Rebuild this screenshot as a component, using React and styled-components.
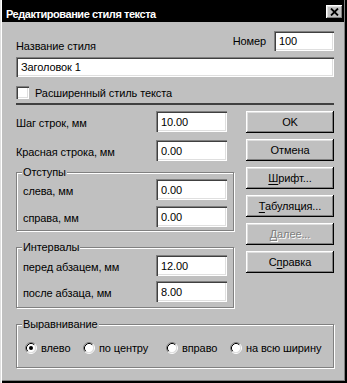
import React from 'react';
import styled, { createGlobalStyle } from 'styled-components';

const GlobalStyle = createGlobalStyle`
  *, *::before, *::after { box-sizing: border-box; }
  html, body { margin: 0; padding: 0; background: #c0c0c0; }
  body {
    font-family: "Liberation Sans", Arial, sans-serif;
    font-size: 11px;
    letter-spacing: -0.1px;
    color: #000;
  }
`;

const Window = styled.div`
  width: 347px;
  height: 383px;
  padding: 0 3px 3px 2px;
  background: #c0c0c0;
  display: flex;
  flex-direction: column;
  box-shadow: inset 1px 0 #dfdfdf, inset 2px 0 #fff, inset -2px -2px #000,
    inset -3px -3px #808080;
`;

const TitleBar = styled.div`
  height: 22px;
  flex: none;
  background: #000;
  color: #fff;
  display: flex;
  align-items: flex-start;
  justify-content: space-between;
  padding: 0 1px 0 4px;
`;

const TitleText = styled.span`
  margin-top: 7px;
  font-size: 11px;
  font-weight: bold;
  letter-spacing: -0.45px;
  line-height: 14px;
`;

const CloseButton = styled.div`
  margin-top: 5px;
  width: 17px;
  height: 14px;
  background: #c0c0c0;
  display: flex;
  align-items: center;
  justify-content: center;
  box-shadow: inset -1px -1px #000, inset 1px 1px #fff, inset -2px -2px #808080,
    inset 2px 2px #dfdfdf;
`;

const Body = styled.div`
  flex: 1;
  padding: 9px 10px 0 14px;
  display: flex;
  flex-direction: column;
`;

const TopRow = styled.div`
  height: 20px;
  display: flex;
  justify-content: space-between;
  align-items: flex-end;
`;

const Label = styled.span`
  line-height: 14px;
  white-space: nowrap;
  margin-bottom: ${p => p.$drop || 0}px;
`;

const NumberGroup = styled.div`
  height: 20px;
  display: flex;
  align-items: center;
  gap: 8px;
`;

const Field = styled.div`
  flex: none;
  width: ${p => (p.$w ? `${p.$w}px` : '100%')};
  height: ${p => p.$h || 21}px;
  margin-top: ${p => p.$top || 0}px;
  background: #fff;
  padding: 0 4px 0 5px;
  display: flex;
  align-items: center;
  line-height: 14px;
  white-space: nowrap;
  box-shadow: inset 1px 1px #808080, inset 2px 2px #404040, inset -1px -1px #fff,
    inset -2px -2px #dfdfdf;
`;

const CheckRow = styled.div`
  margin-top: 9px;
  height: 13px;
  display: flex;
  align-items: center;
  gap: 6px;
`;

const CheckBox = styled.span`
  width: 13px;
  height: 13px;
  background: #fff;
  box-shadow: inset 1px 1px #808080, inset 2px 2px #404040, inset -1px -1px #fff,
    inset -2px -2px #dfdfdf;
`;

const Separator = styled.div`
  margin-top: 4px;
  height: 2px;
  background: #404040;
`;

const Main = styled.div`
  margin-top: 6px;
  display: flex;
  gap: 12px;
`;

const LeftColumn = styled.div`
  width: 218px;
  display: flex;
  flex-direction: column;
`;

const Rows = styled.div`
  display: flex;
  flex-direction: column;
  gap: ${p => p.$gap}px;
  padding-right: ${p => p.$right || 0}px;
`;

const FieldRow = styled.div`
  display: flex;
  align-items: center;
  justify-content: space-between;
`;

const RowLabel = styled.span`
  line-height: 14px;
  padding-top: 2px;
  white-space: nowrap;
`;

const Group = styled.div`
  position: relative;
  margin-top: ${p => p.$top}px;
  border: 1px solid #808080;
  box-shadow: inset 1px 1px #fff, 1px 1px #fff;
  padding: ${p => p.$pad};
`;

const Legend = styled.span`
  position: absolute;
  top: -8px;
  left: 5px;
  padding: 0 1px;
  line-height: 14px;
  background: #c0c0c0;
`;

const ButtonColumn = styled.div`
  width: 88px;
  display: flex;
  flex-direction: column;
  gap: 6px;
`;

const Button = styled.button`
  height: 22px;
  width: 100%;
  padding: 0;
  border: 0;
  font: inherit;
  letter-spacing: inherit;
  line-height: 14px;
  background: #c0c0c0;
  color: ${p => (p.disabled ? '#808080' : '#000')};
  text-shadow: ${p => (p.disabled ? '1px 1px #fff' : 'none')};
  box-shadow: inset -1px -1px #000, inset 1px 1px #fff, inset -2px -2px #808080,
    inset 2px 2px #dfdfdf;

  u {
    text-underline-offset: 2px;
  }
`;

const RadioGrid = styled.div`
  display: grid;
  grid-template-columns: 58px 83px 64px auto;
  height: 14px;
`;

const RadioItem = styled.label`
  display: flex;
  align-items: center;
  gap: 4px;
  line-height: 14px;
  white-space: nowrap;
`;

const CloseIcon = () => (
  <svg width="9" height="8" viewBox="0 0 9 8">
    <path d="M1 0.5 L8 7.5 M8 0.5 L1 7.5" stroke="#000" strokeWidth="1.8" fill="none" />
  </svg>
);

const RadioIcon = ({ checked }) => (
  <svg width="12" height="12" viewBox="0 0 12 12">
    <circle cx="6" cy="6" r="4.5" fill="#fff" />
    <path d="M2.11 9.89 A5.5 5.5 0 0 1 9.89 2.11" stroke="#808080" fill="none" />
    <path d="M9.89 2.11 A5.5 5.5 0 0 1 2.11 9.89" stroke="#fff" fill="none" />
    <path d="M2.82 9.18 A4.5 4.5 0 0 1 9.18 2.82" stroke="#000" fill="none" />
    <path d="M9.18 2.82 A4.5 4.5 0 0 1 2.82 9.18" stroke="#dfdfdf" fill="none" />
    {checked && <circle cx="6" cy="6" r="2" fill="#000" />}
  </svg>
);

const alignments = [
  { label: 'влево', checked: true },
  { label: 'по центру' },
  { label: 'вправо' },
  { label: 'на всю ширину' },
];

export default function App() {
  return (
    <>
      <GlobalStyle />
      <Window>
        <TitleBar>
          <TitleText>Редактирование стиля текста</TitleText>
          <CloseButton>
            <CloseIcon />
          </CloseButton>
        </TitleBar>
        <Body>
          <TopRow>
            <Label $drop={-2}>Название стиля</Label>
            <NumberGroup>
              <Label>Номер</Label>
              <Field $w={60} $h={20}>100</Field>
            </NumberGroup>
          </TopRow>
          <Field $h={20} $top={6}>Заголовок 1</Field>
          <CheckRow>
            <CheckBox />
            <Label>Расширенный стиль текста</Label>
          </CheckRow>
          <Separator />
          <Main>
            <LeftColumn>
              <Rows $gap={8} $right={7}>
                <FieldRow>
                  <RowLabel>Шаг строк, мм</RowLabel>
                  <Field $w={71}>10.00</Field>
                </FieldRow>
                <FieldRow>
                  <RowLabel>Красная строка, мм</RowLabel>
                  <Field $w={71}>0.00</Field>
                </FieldRow>
              </Rows>
              <Group $top={11} $pad="6px 6px 3px 6px">
                <Legend>Отступы</Legend>
                <Rows $gap={6}>
                  <FieldRow>
                    <RowLabel>слева, мм</RowLabel>
                    <Field $w={71}>0.00</Field>
                  </FieldRow>
                  <FieldRow>
                    <RowLabel>справа, мм</RowLabel>
                    <Field $w={71}>0.00</Field>
                  </FieldRow>
                </Rows>
              </Group>
              <Group $top={16} $pad="7px 6px 5px 6px">
                <Legend>Интервалы</Legend>
                <Rows $gap={5}>
                  <FieldRow>
                    <RowLabel>перед абзацем, мм</RowLabel>
                    <Field $w={71}>12.00</Field>
                  </FieldRow>
                  <FieldRow>
                    <RowLabel>после абзаца, мм</RowLabel>
                    <Field $w={71}>8.00</Field>
                  </FieldRow>
                </Rows>
              </Group>
            </LeftColumn>
            <ButtonColumn>
              <Button>OK</Button>
              <Button>Отмена</Button>
              <Button><u>Ш</u>рифт...</Button>
              <Button><u>Т</u>абуляция...</Button>
              <Button disabled><u>Д</u>алее...</Button>
              <Button>С<u>п</u>равка</Button>
            </ButtonColumn>
          </Main>
          <Group $top={16} $pad="16px 6px 12px 8px">
            <Legend>Выравнивание</Legend>
            <RadioGrid>
              {alignments.map(a => (
                <RadioItem key={a.label}>
                  <RadioIcon checked={a.checked} />
                  {a.label}
                </RadioItem>
              ))}
            </RadioGrid>
          </Group>
        </Body>
      </Window>
    </>
  );
}
